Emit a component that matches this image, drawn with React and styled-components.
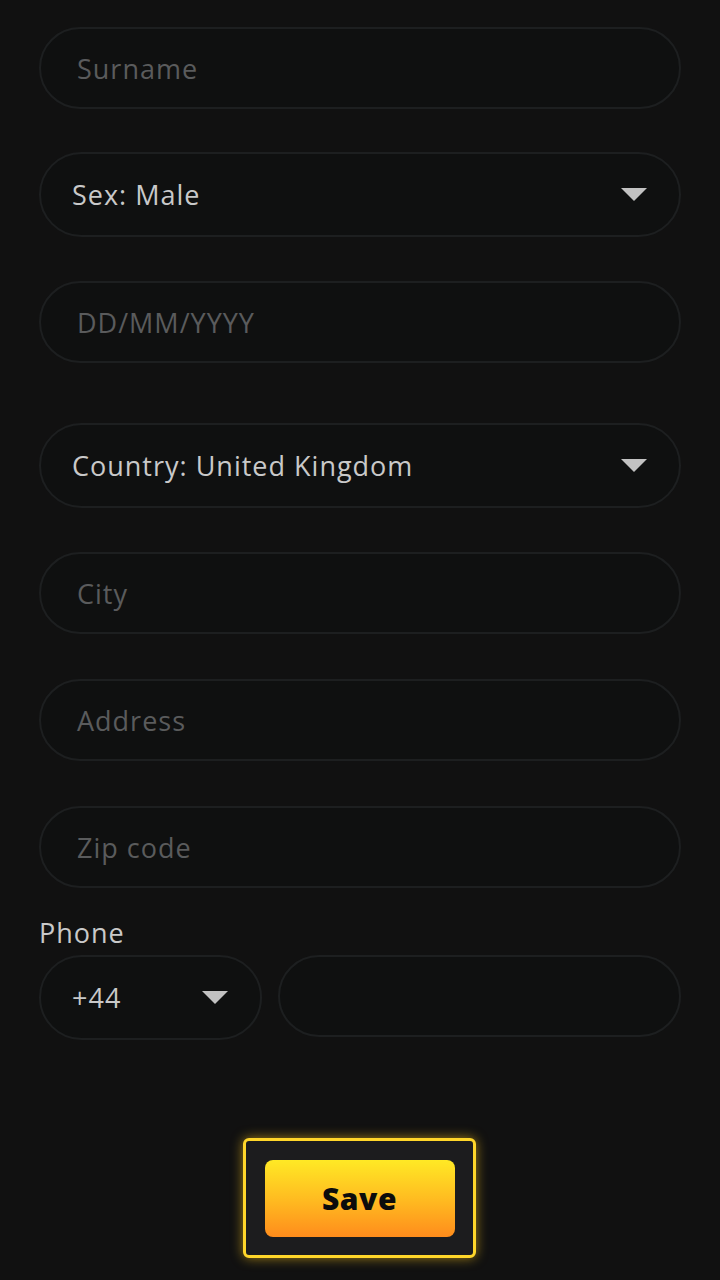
import React from 'react';
import styled, { createGlobalStyle } from 'styled-components';

const GlobalStyle = createGlobalStyle`
  html, body {
    margin: 0;
    padding: 0;
    background: #111111;
  }
  body {
    font-family: "Open Sans", "Noto Sans", sans-serif;
  }
`;

const Page = styled.div`
  width: 720px;
  min-height: 1280px;
  box-sizing: border-box;
  padding: 27px 39px 0 39px;
  display: flex;
  flex-direction: column;
`;

const Field = styled.div`
  box-sizing: border-box;
  height: ${p => (p.select ? 85 : 82)}px;
  margin-bottom: ${p => p.gap ?? 44}px;
  border: 2px solid #1d1f20;
  border-radius: 44px;
  background: #0f1010;
  display: flex;
  align-items: center;
  justify-content: space-between;
  padding: 0 32px 0 ${p => (p.select ? 31 : 36)}px;
  flex: ${p => (p.grow ? 1 : 'none')};
  width: ${p => (p.width ? `${p.width}px` : 'auto')};
`;

const Placeholder = styled.span`
  font-size: 27px;
  color: #5a5b5c;
  letter-spacing: 1px;
`;

const Value = styled.span`
  font-size: 27px;
  color: #c9c9c9;
  letter-spacing: 1px;
`;

const Caret = styled.span`
  width: 0;
  height: 0;
  border-left: 13px solid transparent;
  border-right: 13px solid transparent;
  border-top: 13px solid #c2c2c2;
`;

const Label = styled.div`
  font-size: 27px;
  color: #c9c9c9;
  letter-spacing: 1px;
  margin-bottom: 5px;
  line-height: 34px;
`;

const Row = styled.div`
  display: flex;
  gap: 16px;
  align-items: flex-start;
`;

const SaveWrap = styled.div`
  display: flex;
  justify-content: center;
  margin-top: 98px;
`;

const SaveFrame = styled.div`
  box-sizing: border-box;
  width: 233px;
  height: 120px;
  border: 3px solid #ffd62a;
  border-radius: 6px;
  background: #1c1c1e;
  box-shadow: 0 0 12px rgba(255, 200, 30, 0.6);
  display: flex;
  align-items: center;
  justify-content: center;
  margin-left: -1px;
`;

const SaveButton = styled.button`
  width: 190px;
  height: 77px;
  border: none;
  border-radius: 8px;
  background: linear-gradient(180deg, #ffe925 0%, #ffb820 55%, #ff8c1c 100%);
  font-family: "Open Sans", "Noto Sans", sans-serif;
  font-weight: 800;
  font-size: 30px;
  letter-spacing: 0.5px;
  color: #0c0c0c;
  cursor: pointer;
`;

export default function App() {
  return (
    <>
      <GlobalStyle />
      <Page>
        <Field gap={43}>
          <Placeholder>Surname</Placeholder>
        </Field>
        <Field select gap={44}>
          <Value>Sex: Male</Value>
          <Caret />
        </Field>
        <Field gap={60}>
          <Placeholder>DD/MM/YYYY</Placeholder>
        </Field>
        <Field select gap={44}>
          <Value>Country: United Kingdom</Value>
          <Caret />
        </Field>
        <Field gap={45}>
          <Placeholder>City</Placeholder>
        </Field>
        <Field gap={45}>
          <Placeholder>Address</Placeholder>
        </Field>
        <Field gap={28}>
          <Placeholder>Zip code</Placeholder>
        </Field>
        <Label>Phone</Label>
        <Row>
          <Field select width={223} gap={0}>
            <Value>+44</Value>
            <Caret />
          </Field>
          <Field grow gap={0} />
        </Row>
        <SaveWrap>
          <SaveFrame>
            <SaveButton>Save</SaveButton>
          </SaveFrame>
        </SaveWrap>
      </Page>
    </>
  );
}
